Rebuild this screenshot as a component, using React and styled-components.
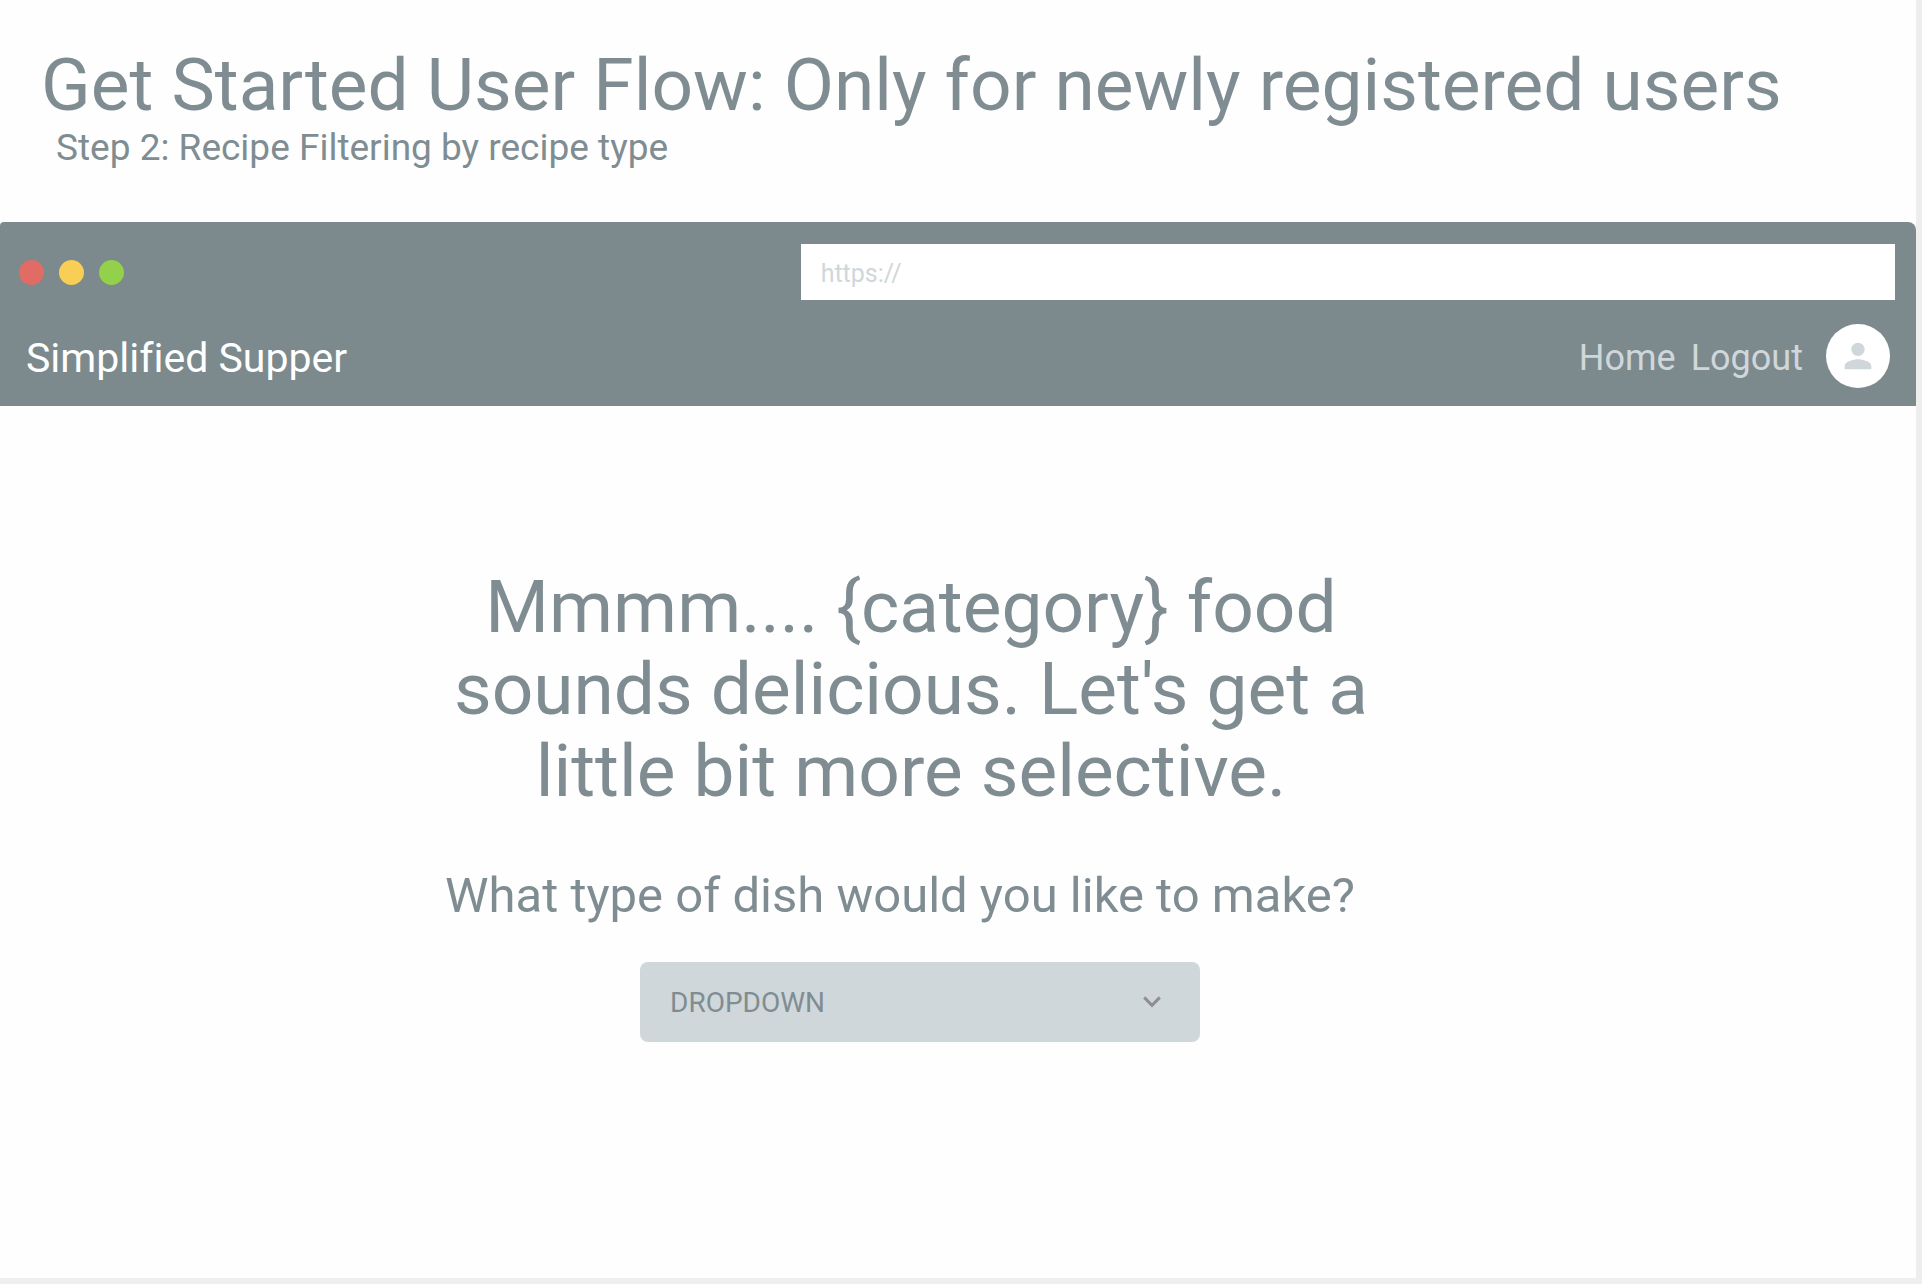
import React from "react";
import styled, { createGlobalStyle } from "styled-components";
import { MdPerson } from "react-icons/md";

const slate = "#7c8a8e";
const ink = "#7f8d92";
const mist = "#d0d7da";
const paper = "#fefefe";

const GlobalStyle = createGlobalStyle`
  *, *::before, *::after { box-sizing: border-box; }
  body {
    margin: 0;
    background: #eeeeee;
    color: ${ink};
    font-family: Roboto, "Liberation Sans", sans-serif;
    font-variant-ligatures: none;
  }
  h1, h2, p { margin: 0; font-weight: 400; }
`;

const Page = styled.div`
  display: flex;
  min-height: 100vh;
  padding: 0 6px 6px 0;
`;

const Artboard = styled.div`
  flex: 1;
  min-width: 0;
  background: ${paper};
`;

const Intro = styled.header`
  padding: 44px 41px 52px;
`;

const Title = styled.h1`
  font-size: 73px;
  line-height: 82px;
`;

const Step = styled.p`
  padding-left: 15px;
  font-size: 37px;
  line-height: 44px;
`;

const BrowserChrome = styled.div`
  border-radius: 4px 8px 0 0;
  background: ${slate};
`;

const AddressRow = styled.div`
  display: grid;
  grid-template-columns: 5fr 7fr;
  align-items: center;
  padding: 22px 21px 24px 19px;
`;

const WindowButtons = styled.div`
  display: flex;
  gap: 15px;
`;

const WindowButton = styled.button`
  width: 25px;
  height: 25px;
  padding: 0;
  border: 0;
  border-radius: 50%;
  background: ${(p) => p.$color};
`;

const AddressInput = styled.input`
  width: 100%;
  height: 56px;
  padding: 3px 20px 0;
  border: 0;
  border-radius: 0;
  background: #ffffff;
  color: ${ink};
  font: inherit;
  font-size: 25px;
  &::placeholder { color: ${mist}; opacity: 1; }
`;

const NavBar = styled.div`
  display: flex;
  align-items: center;
  justify-content: space-between;
  padding: 0 26px 18px;
`;

const Brand = styled.a`
  padding-top: 4px;
  color: #ffffff;
  font-size: 41px;
  line-height: 48px;
  text-decoration: none;
`;

const NavLinks = styled.nav`
  display: flex;
  align-items: center;
  gap: 15px;
`;

const NavLink = styled.a`
  padding-top: 4px;
  color: ${mist};
  font-size: 36px;
  line-height: 44px;
  text-decoration: none;
`;

const Avatar = styled.button`
  display: grid;
  place-items: center;
  width: 64px;
  height: 64px;
  margin-left: 8px;
  padding: 0;
  border: 0;
  border-radius: 50%;
  background: #ffffff;
  color: ${mist};
  font-size: 40px;
`;

const Content = styled.main`
  display: flex;
  flex-direction: column;
  align-items: center;
  padding: 160px 76px 0 0;
`;

const Headline = styled.h2`
  width: 960px;
  max-width: 100%;
  padding-right: 18px;
  font-size: 73px;
  line-height: 82px;
  text-align: center;
`;

const Question = styled.label`
  padding: 56px 40px 38px 0;
  font-size: 49px;
  line-height: 56px;
`;

const SelectBox = styled.div`
  position: relative;
  width: 560px;
  max-width: 100%;
`;

const Select = styled.select`
  appearance: none;
  width: 100%;
  height: 80px;
  padding: 0 80px 0 30px;
  border: 0;
  border-radius: 8px;
  background: ${mist};
  color: ${ink};
  font: inherit;
  font-size: 28px;
`;

const Chevron = styled.svg`
  position: absolute;
  top: 34px;
  right: 39px;
  width: 18px;
  height: 12px;
  pointer-events: none;
`;

export default function App() {
  return (
    <>
      <GlobalStyle />
      <Page>
        <Artboard>
          <Intro>
            <Title>Get Started User Flow: Only for newly registered users</Title>
            <Step>Step 2: Recipe Filtering by recipe type</Step>
          </Intro>
          <BrowserChrome>
            <AddressRow>
              <WindowButtons>
                <WindowButton $color="#e16b65" aria-label="Close" />
                <WindowButton $color="#f9ce54" aria-label="Minimize" />
                <WindowButton $color="#93d14a" aria-label="Maximize" />
              </WindowButtons>
              <AddressInput type="text" placeholder="https://" aria-label="Address" />
            </AddressRow>
            <NavBar>
              <Brand href="#">Simplified Supper</Brand>
              <NavLinks>
                <NavLink href="#home">Home</NavLink>
                <NavLink href="#logout">Logout</NavLink>
                <Avatar aria-label="Profile">
                  <MdPerson />
                </Avatar>
              </NavLinks>
            </NavBar>
          </BrowserChrome>
          <Content>
            <Headline>
              {"Mmmm.... {category} food sounds delicious. Let's get a little bit more selective."}
            </Headline>
            <Question htmlFor="dish-type">What type of dish would you like to make?</Question>
            <SelectBox>
              <Select id="dish-type" defaultValue="dropdown">
                <option value="dropdown">DROPDOWN</option>
              </Select>
              <Chevron viewBox="0 0 18 12" fill="none" aria-hidden="true">
                <path d="M1.2 1.4 9 9.3l7.8-7.9" stroke="#8f8f8f" strokeWidth="3" />
              </Chevron>
            </SelectBox>
          </Content>
        </Artboard>
      </Page>
    </>
  );
}
